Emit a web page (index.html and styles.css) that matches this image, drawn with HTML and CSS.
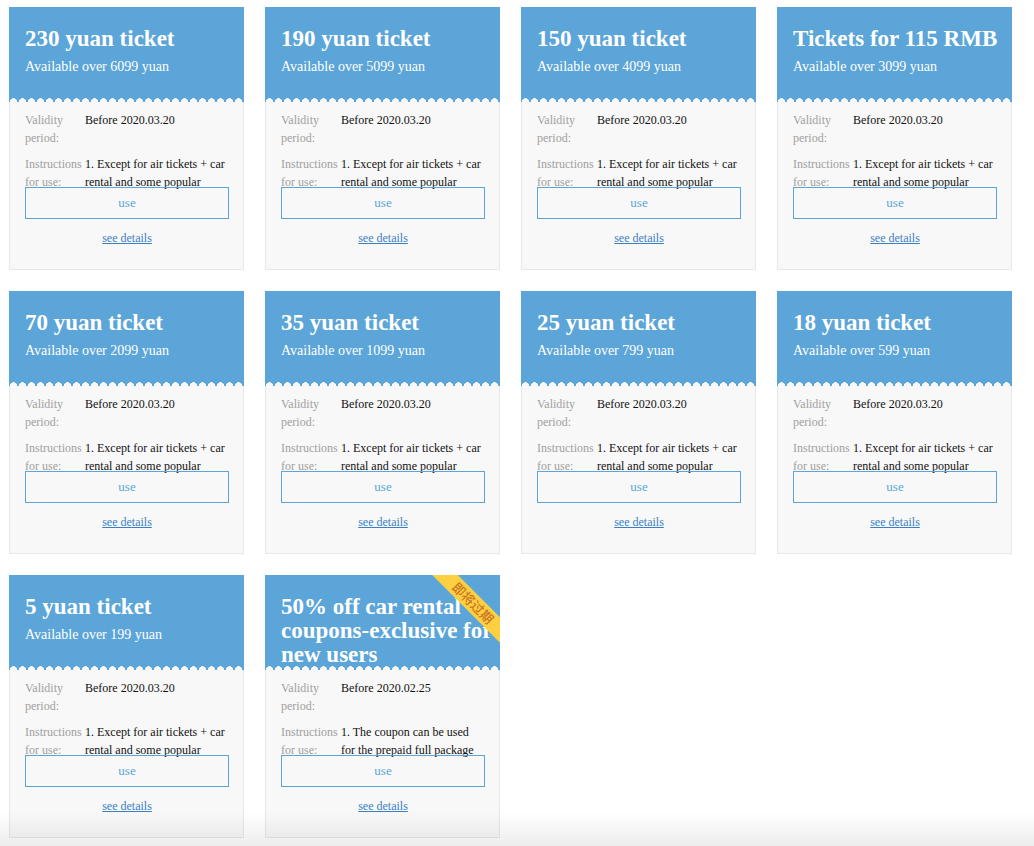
FILE: index.html
```html
<!DOCTYPE html>
<html lang="en">
<head>
<meta charset="utf-8">
<title>Coupons</title>
<link rel="stylesheet" href="styles.css">
</head>
<body>
<div class="grid">
  <div class="card">
    <div class="head"><div class="title">230 yuan ticket</div><div class="sub">Available over 6099 yuan</div></div>
    <div class="body">
      <div class="row"><div class="lbl">Validity period:</div><div class="val">Before 2020.03.20</div></div>
      <div class="row clip"><div class="lbl">Instructions for use:</div><div class="val">1. Except for air tickets + car rental and some popular routes</div></div>
      <div class="btn">use</div>
      <a class="more" href="#">see details</a>
    </div>
  </div>
  <div class="card">
    <div class="head"><div class="title">190 yuan ticket</div><div class="sub">Available over 5099 yuan</div></div>
    <div class="body">
      <div class="row"><div class="lbl">Validity period:</div><div class="val">Before 2020.03.20</div></div>
      <div class="row clip"><div class="lbl">Instructions for use:</div><div class="val">1. Except for air tickets + car rental and some popular routes</div></div>
      <div class="btn">use</div>
      <a class="more" href="#">see details</a>
    </div>
  </div>
  <div class="card">
    <div class="head"><div class="title">150 yuan ticket</div><div class="sub">Available over 4099 yuan</div></div>
    <div class="body">
      <div class="row"><div class="lbl">Validity period:</div><div class="val">Before 2020.03.20</div></div>
      <div class="row clip"><div class="lbl">Instructions for use:</div><div class="val">1. Except for air tickets + car rental and some popular routes</div></div>
      <div class="btn">use</div>
      <a class="more" href="#">see details</a>
    </div>
  </div>
  <div class="card">
    <div class="head"><div class="title">Tickets for 115 RMB</div><div class="sub">Available over 3099 yuan</div></div>
    <div class="body">
      <div class="row"><div class="lbl">Validity period:</div><div class="val">Before 2020.03.20</div></div>
      <div class="row clip"><div class="lbl">Instructions for use:</div><div class="val">1. Except for air tickets + car rental and some popular routes</div></div>
      <div class="btn">use</div>
      <a class="more" href="#">see details</a>
    </div>
  </div>
  <div class="card">
    <div class="head"><div class="title">70 yuan ticket</div><div class="sub">Available over 2099 yuan</div></div>
    <div class="body">
      <div class="row"><div class="lbl">Validity period:</div><div class="val">Before 2020.03.20</div></div>
      <div class="row clip"><div class="lbl">Instructions for use:</div><div class="val">1. Except for air tickets + car rental and some popular routes</div></div>
      <div class="btn">use</div>
      <a class="more" href="#">see details</a>
    </div>
  </div>
  <div class="card">
    <div class="head"><div class="title">35 yuan ticket</div><div class="sub">Available over 1099 yuan</div></div>
    <div class="body">
      <div class="row"><div class="lbl">Validity period:</div><div class="val">Before 2020.03.20</div></div>
      <div class="row clip"><div class="lbl">Instructions for use:</div><div class="val">1. Except for air tickets + car rental and some popular routes</div></div>
      <div class="btn">use</div>
      <a class="more" href="#">see details</a>
    </div>
  </div>
  <div class="card">
    <div class="head"><div class="title">25 yuan ticket</div><div class="sub">Available over 799 yuan</div></div>
    <div class="body">
      <div class="row"><div class="lbl">Validity period:</div><div class="val">Before 2020.03.20</div></div>
      <div class="row clip"><div class="lbl">Instructions for use:</div><div class="val">1. Except for air tickets + car rental and some popular routes</div></div>
      <div class="btn">use</div>
      <a class="more" href="#">see details</a>
    </div>
  </div>
  <div class="card">
    <div class="head"><div class="title">18 yuan ticket</div><div class="sub">Available over 599 yuan</div></div>
    <div class="body">
      <div class="row"><div class="lbl">Validity period:</div><div class="val">Before 2020.03.20</div></div>
      <div class="row clip"><div class="lbl">Instructions for use:</div><div class="val">1. Except for air tickets + car rental and some popular routes</div></div>
      <div class="btn">use</div>
      <a class="more" href="#">see details</a>
    </div>
  </div>
  <div class="card">
    <div class="head"><div class="title">5 yuan ticket</div><div class="sub">Available over 199 yuan</div></div>
    <div class="body">
      <div class="row"><div class="lbl">Validity period:</div><div class="val">Before 2020.03.20</div></div>
      <div class="row clip"><div class="lbl">Instructions for use:</div><div class="val">1. Except for air tickets + car rental and some popular routes</div></div>
      <div class="btn">use</div>
      <a class="more" href="#">see details</a>
    </div>
  </div>
  <div class="card">
    <div class="head"><div class="title">50% off car rental coupons-exclusive for new users</div><div class="sub">Available over 50 yuan</div></div>
    <div class="body">
      <div class="row"><div class="lbl">Validity period:</div><div class="val">Before 2020.02.25</div></div>
      <div class="row clip"><div class="lbl">Instructions for use:</div><div class="val">1. The coupon can be used for the prepaid full package car rental</div></div>
      <div class="btn">use</div>
      <a class="more" href="#">see details</a>
    </div>
    <div class="ribbon">即将过期</div>
  </div>
</div>
<div class="fade"></div>
</body>
</html>
```
FILE: styles.css
```css
* { box-sizing: border-box; }
html, body { margin: 0; padding: 0; background: #fff; }
body {
  font-family: "Liberation Serif", "Times New Roman", serif;
}
.grid {
  display: grid;
  grid-template-columns: repeat(4, 235px);
  column-gap: 21px;
  row-gap: 21px;
  padding: 7px 0 0 9px;
}
.card {
  position: relative;
  height: 263px;
  overflow: hidden;
  display: flex;
  flex-direction: column;
}
.head {
  height: 95px;
  flex: none;
  padding: 19px 2px 0 16px;
  color: #fff;
  background:
    radial-gradient(circle at 4.5px 100%, #f8f8f8 3.5px, rgba(92,165,216,0) 4px) left bottom / 9px 5px repeat-x,
    #5ca5d8;
}
.title {
  font-size: 23px;
  line-height: 24px;
  font-weight: bold;
  padding-top: 1px;
}
.sub {
  margin-top: 6px;
  font-size: 14px;
  line-height: 20px;
}
.body {
  flex: 1;
  background: #f8f8f8;
  border: 1px solid #e8e8e8;
  border-top: none;
  padding: 9px 14px 0 15px;
  display: flex;
  flex-direction: column;
}
.row {
  display: flex;
  font-size: 12px;
  line-height: 18px;
  height: 36px;
  margin-bottom: 8px;
}
.row.clip { overflow: hidden; margin-bottom: 0; }
.lbl {
  width: 60px;
  flex: none;
  color: #a0a0a0;
}
.val {
  flex: 1;
  color: #111;
}
.btn {
  margin-top: -4px;
  height: 32px;
  border: 1px solid #5ca5d8;
  color: #5ca5d8;
  font-size: 13px;
  line-height: 30px;
  text-align: center;
}
.more {
  margin-top: 10px;
  align-self: center;
  font-size: 12px;
  line-height: 18px;
  color: #3a80c4;
  text-decoration: underline;
}
.ribbon {
  position: absolute;
  left: 158px;
  top: 19px;
  width: 100px;
  height: 18px;
  background: #fcd040;
  color: #cc7424;
  font-family: "Noto Sans CJK SC", sans-serif;
  font-size: 13px;
  font-weight: 500;
  line-height: 18px;
  text-align: center;
  transform: rotate(45deg);
}
.fade {
  position: fixed;
  left: 0;
  right: 0;
  bottom: 0;
  height: 34px;
  pointer-events: none;
  background: linear-gradient(to bottom, rgba(0,0,0,0), rgba(0,0,0,0.07));
}
```
